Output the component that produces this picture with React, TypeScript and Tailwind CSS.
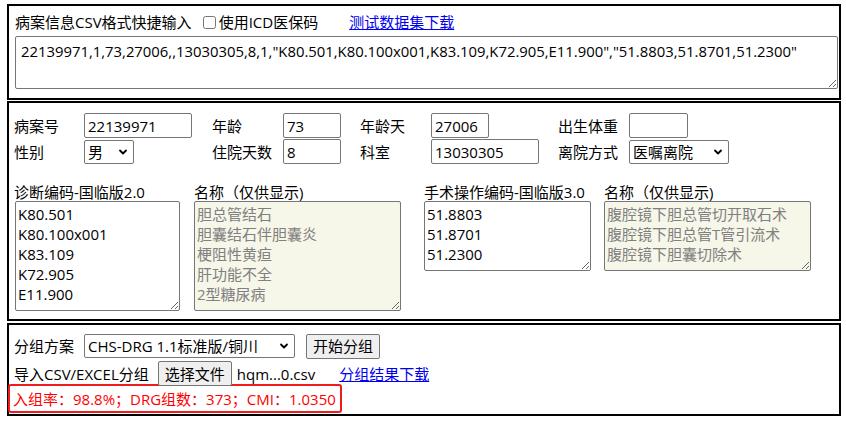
import { ChevronDown } from "lucide-react";

const font = "font-['Open_Sans','Noto_Sans_CJK_SC',sans-serif]";

const fieldCls =
  "h-[25px] rounded-[2px] border border-[#767676] bg-white px-[3px] text-[15px] leading-[20px] text-black outline-none";

function Select({ value, width }: { value: string; width: string }) {
  return (
    <div className={`relative h-[24px] ${width}`}>
      <select
        defaultValue={value}
        className="h-full w-full appearance-none rounded-[2px] border border-[#767676] bg-white pl-[3px] pr-[20px] text-[15px] leading-[20px] text-black outline-none"
      >
        <option>{value}</option>
      </select>
      <ChevronDown
        strokeWidth={3.6}
        className="pointer-events-none absolute right-[5px] top-[6px] h-[12px] w-[12px] text-black"
      />
    </div>
  );
}

function Label({ children }: { children: React.ReactNode }) {
  return <span className="text-[15px] leading-[20px] text-black">{children}</span>;
}

export default function App() {
  const diag = ["K80.501", "K80.100x001", "K83.109", "K72.905", "E11.900"];
  const diagNames = ["胆总管结石", "胆囊结石伴胆囊炎", "梗阻性黄疸", "肝功能不全", "2型糖尿病"];
  const ops = ["51.8803", "51.8701", "51.2300"];
  const opNames = ["腹腔镜下胆总管切开取石术", "腹腔镜下胆总管T管引流术", "腹腔镜下胆囊切除术"];

  return (
    <div className={`${font} min-h-[422px] bg-white pl-[7px] pt-[4px] text-[15px] leading-[20px] text-black`}>
      {/* quick CSV input */}
      <section className="h-[96px] w-[834px] border-2 border-black pl-[6px] pt-[6px]">
        <div className="flex h-[20px] items-center">
          <Label>病案信息CSV格式快捷输入</Label>
          <input type="checkbox" className="ml-[11px] h-[13px] w-[13px]" />
          <span className="ml-[3px]">使用ICD医保码</span>
          <a href="#" className="ml-[31px] text-[#0000ee] underline">
            测试数据集下载
          </a>
        </div>
        <textarea
          defaultValue={`22139971,1,73,27006,,13030305,8,1,"K80.501,K80.100x001,K83.109,K72.905,E11.900","51.8803,51.8701,51.2300"`}
          className="mt-[4px] block h-[53px] w-[823px] rounded-[2px] border border-[#767676] px-[5px] pt-[4px] text-[14.85px] leading-[20px] text-black outline-none"
        />
      </section>

      {/* case fields */}
      <section className="mt-[1px] h-[220px] w-[834px] border-2 border-black pl-[5px] pt-[10px]">
        <div className="grid grid-cols-[70px_128px_71px_77px_71px_127px_71px_auto] items-center gap-y-[1px]">
          <Label>病案号</Label>
          <input defaultValue="22139971" className={`${fieldCls} w-[108px]`} />
          <Label>年龄</Label>
          <input defaultValue="73" className={`${fieldCls} w-[58px]`} />
          <Label>年龄天</Label>
          <input defaultValue="27006" className={`${fieldCls} w-[58px]`} />
          <Label>出生体重</Label>
          <input defaultValue="" className={`${fieldCls} w-[59px]`} />

          <Label>性别</Label>
          <Select value="男" width="w-[50px]" />
          <Label>住院天数</Label>
          <input defaultValue="8" className={`${fieldCls} w-[58px]`} />
          <Label>科室</Label>
          <input defaultValue="13030305" className={`${fieldCls} w-[108px]`} />
          <Label>离院方式</Label>
          <Select value="医嘱离院" width="w-[100px]" />
        </div>

        <div className="mt-[19px] flex items-start">
          <div className="flex flex-col">
            <span className="h-[18px] leading-[18px]">诊断编码-国临版2.0</span>
            <textarea
              defaultValue={diag.join("\n")}
              className="ml-[1px] block h-[110px] w-[165px] rounded-[2px] border border-[#767676] px-[2px] pt-[2px] text-[15px] leading-[20px] text-black outline-none"
            />
          </div>
          <div className="ml-[14px] flex flex-col">
            <span className="h-[18px] leading-[18px]">名称（仅供显示)</span>
            <textarea
              readOnly
              defaultValue={diagNames.join("\n")}
              className="block h-[110px] w-[207px] rounded-[2px] border border-[#767676] bg-[#f6f6e9] px-[2px] pt-[2px] text-[15px] leading-[20px] text-[#808080] outline-none"
            />
          </div>
          <div className="ml-[23px] flex flex-col">
            <span className="h-[18px] leading-[18px]">手术操作编码-国临版3.0</span>
            <textarea
              defaultValue={ops.join("\n")}
              className="block h-[70px] w-[167px] rounded-[2px] border border-[#767676] px-[2px] pt-[2px] text-[15px] leading-[20px] text-black outline-none"
            />
          </div>
          <div className="ml-[13px] flex flex-col">
            <span className="h-[18px] leading-[18px]">名称（仅供显示)</span>
            <textarea
              readOnly
              defaultValue={opNames.join("\n")}
              className="block h-[70px] w-[207px] rounded-[2px] border border-[#767676] bg-[#f6f6e9] px-[2px] pt-[2px] text-[15px] leading-[20px] text-[#808080] outline-none"
            />
          </div>
        </div>
      </section>

      {/* grouping */}
      <section className="mt-[2px] h-[93px] w-[834px] border-2 border-black pl-[5px] pt-[8px]">
        <div className="flex h-[26px] items-center">
          <span className="w-[70px]">分组方案</span>
          <Select value="CHS-DRG 1.1标准版/铜川" width="w-[211px]" />
          <button className="ml-[11px] h-[25px] rounded-[2px] border border-[#767676] bg-[#efefef] px-[6px] text-[15px] leading-[20px]">
            开始分组
          </button>
        </div>
        <div className="mt-[2px] flex h-[25px] items-center">
          <span>导入CSV/EXCEL分组</span>
          <button className="ml-[9px] h-[25px] rounded-[2px] border border-[#767676] bg-[#efefef] px-[6px] text-[15px] leading-[20px]">
            选择文件
          </button>
          <span className="ml-[5px]">hqm...0.csv</span>
          <a href="#" className="ml-[24px] text-[#0000ee] underline">
            分组结果下载
          </a>
        </div>
        <div className="-ml-[6px] mt-[-2px] flex h-[29px] w-[334px] items-center rounded-[3px] border-[2.5px] border-[#ee1c1c] pl-[3px] text-[#ff0000]">
          入组率：98.8%；DRG组数：373；CMI：1.0350
        </div>
      </section>
    </div>
  );
}
